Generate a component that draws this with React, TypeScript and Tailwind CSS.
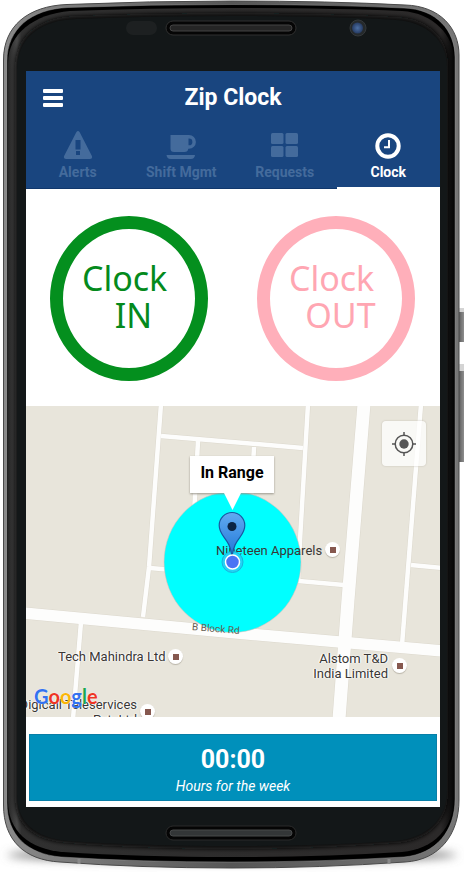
import React from "react";

const ROBOTO = "font-['Roboto','Liberation_Sans',sans-serif]";

function PhoneShell() {
  return (
    <svg
      aria-hidden="true"
      className="absolute inset-0 h-full w-full"
      viewBox="0 0 464 872"
      preserveAspectRatio="none"
    >
      <defs>
        <linearGradient id="edge" x1="0" x2="1" y1="0" y2="0">
          <stop offset="0" stopColor="#8a8a8a" />
          <stop offset="0.5" stopColor="#565656" />
          <stop offset="1" stopColor="#777777" />
        </linearGradient>
        <linearGradient id="band" x1="0" x2="1" y1="0" y2="0">
          <stop offset="0" stopColor="#262626" />
          <stop offset="0.02" stopColor="#484848" />
          <stop offset="0.03" stopColor="#303030" />
          <stop offset="0.97" stopColor="#2b2929" />
          <stop offset="1" stopColor="#050505" />
        </linearGradient>
        <linearGradient id="key" x1="0" x2="1" y1="0" y2="0">
          <stop offset="0" stopColor="#444444" />
          <stop offset="0.5" stopColor="#777777" />
          <stop offset="1" stopColor="#a0a0a0" />
        </linearGradient>
        <radialGradient id="lens">
          <stop offset="0" stopColor="#4d6fa3" />
          <stop offset="1" stopColor="#263b62" />
        </radialGradient>
        <filter id="soft" x="-20%" y="-200%" width="140%" height="500%">
          <feGaussianBlur stdDeviation="5" />
        </filter>
        <filter id="blend">
          <feGaussianBlur stdDeviation="2" />
        </filter>
      </defs>
      <ellipse cx="232" cy="855" rx="225" ry="7" fill="#777777" filter="url(#soft)" />
      <rect x="457" y="308" width="9" height="34" rx="2" fill="url(#key)" />
      <rect x="457" y="364" width="9" height="98" rx="2" fill="url(#key)" />
      <rect x="459" y="308" width="7" height="4" fill="#d4d4d4" />
      <rect x="459" y="364" width="7" height="7" fill="#d4d4d4" />
      <path
        d="M3.500 60C3.500 26 28 6 67 4.500Q150 1 232 1Q330 1 405 5C440 6 459 28 459 55V800C459 834 440 860 405 862Q320 868 232 868Q140 868 60 862C24 860 3.500 840 3.500 805Z"
        fill="url(#edge)"
        stroke="#4a4a4a"
        strokeWidth="1"
      />
      <path
        d="M7 61C7 29 31 9 68 7.500Q150 4.500 232 4.500Q330 4.500 404 8C437 9 455 31 455 57V799C455 831 436 854 404 857Q320 862 232 862Q140 862 61 857C27 854 7 835 7 803Z"
        fill="#000000"
        stroke="#9a9a9a"
        strokeOpacity="0.45"
        strokeWidth="1"
      />
      <path
        d="M8 63C8 34 34 14 70 11Q150 8 232 8Q330 8 402 11C433 13 454 35 454 60V797C454 828 434 849 402 852Q320 857 232 857Q140 857 63 852C29 849 8 831 8 801Z"
        fill="url(#band)"
      />
      <path
        d="M15 68C15 36 38 18 74 16Q150 13 232 13Q330 13 398 17C429 19 448 38 448 64V793C448 822 428 840 398 843Q320 849 232 849Q140 849 66 843C33 840 15 825 15 797Z"
        fill="#0a0b0b"
        filter="url(#blend)"
      />
      <path
        d="M17 70C17 38 40 20 76 19Q150 16 232 16Q330 16 396 20C427 22 447 41 447 66V791C447 820 426 838 396 841Q320 846 232 846Q140 846 68 841C35 838 17 822 17 795Z"
        fill="#131718"
      />
      <rect x="126" y="21" width="31" height="14" rx="7" fill="#1d2021" />
      <rect x="166" y="21" width="130" height="14" rx="7" fill="#050505" stroke="#303030" />
      <rect x="170" y="25" width="122" height="6" rx="3" fill="#252525" stroke="#444444" />
      <circle cx="358" cy="28" r="8" fill="#25292b" stroke="#34383a" />
      <circle cx="357.500" cy="28" r="5.500" fill="url(#lens)" />
      <rect x="166" y="826" width="130" height="14" rx="7" fill="#050505" stroke="#2b2b2b" />
      <rect x="170" y="830" width="122" height="6" rx="3" fill="#333637" stroke="#484a4b" />
      <path d="M79 859v5M389 859v5" stroke="#8a8a8a" strokeWidth="3" />
    </svg>
  );
}

function AlertIcon() {
  return (
    <svg width="30" height="28" viewBox="0 0 30 28" fill="currentColor" aria-hidden="true">
      <path
        fillRule="evenodd"
        d="M13.300 1.200Q15 -1 16.700 1.200L28.900 25Q29.800 28 27 28H3Q.2 28 1.100 25ZM12.500 9V18.500H17.500V9ZM13 20V24H17V20Z"
      />
    </svg>
  );
}

function CupIcon() {
  return (
    <svg width="30" height="24" viewBox="0 0 30 24" fill="currentColor" aria-hidden="true">
      <path
        fillRule="evenodd"
        d="M4.500 0H23a6.800 6.800 0 0 1 0 13.800H22.300Q21.800 17 18.500 17H8Q4.500 17 4.500 13.500ZM22.500 3.500V10.300H23a3.300 3.300 0 0 0 0-6.800Z"
      />
      <path d="M.5 20H29Q28.500 24 25 24H4.500Q1 24 .5 20Z" />
    </svg>
  );
}

function GridIcon() {
  return (
    <svg width="27" height="26" viewBox="0 0 27 26" fill="currentColor" aria-hidden="true">
      <rect width="12.500" height="11" rx="1.500" />
      <rect x="14.500" width="12.500" height="11" rx="1.500" />
      <rect y="13" width="12.500" height="11" rx="1.500" />
      <rect x="14.500" y="13" width="12.500" height="11" rx="1.500" />
    </svg>
  );
}

function ClockIcon() {
  return (
    <svg width="26" height="26" viewBox="0 0 26 26" fill="none" stroke="currentColor" aria-hidden="true">
      <circle cx="13" cy="13" r="10.700" strokeWidth="4" />
      <path d="M14 7V14.300H9" strokeWidth="2" />
    </svg>
  );
}

const tabs = [
  { label: "Alerts", icon: <AlertIcon />, active: false },
  { label: "Shift Mgmt", icon: <CupIcon />, active: false },
  { label: "Requests", icon: <GridIcon />, active: false },
  { label: "Clock", icon: <ClockIcon />, active: true },
];

function Header() {
  return (
    <header className="bg-[#19457f] text-white">
      <div className="grid h-[54px] grid-cols-[54px_1fr_54px] items-center">
        <button type="button" aria-label="Menu" className="flex h-full items-center pl-[17px]">
          <svg width="20" height="18" viewBox="0 0 20 18" fill="currentColor" aria-hidden="true">
            <rect width="20" height="4" rx="1" />
            <rect y="7" width="20" height="4" rx="1" />
            <rect y="14" width="20" height="4" rx="1" />
          </svg>
        </button>
        <h1 className="text-center text-[23px] font-bold">Zip Clock</h1>
      </div>
      <nav className="grid grid-cols-4">
        {tabs.map((tab) => (
          <button
            key={tab.label}
            type="button"
            aria-current={tab.active ? "page" : undefined}
            className={
              tab.active
                ? "flex h-16 flex-col items-center gap-[3px] border-b-2 border-white text-white"
                : "flex h-16 flex-col items-center gap-[3px] border-b border-[#10376c] text-[#446b9c]"
            }
          >
            <span className="flex h-[34px] items-end">{tab.icon}</span>
            <span className="text-sm font-bold leading-5">{tab.label}</span>
          </button>
        ))}
      </nav>
    </header>
  );
}

function PunchButtons() {
  return (
    <section className="flex h-[217px] justify-between bg-white pt-[27px] pr-[25px] pl-6 font-['Noto_Sans','DejaVu_Sans',sans-serif] text-[34px] leading-[37px]">
      <button
        type="button"
        className="h-[165px] w-[158px] rounded-[50%] border-[13px] border-[#048f1e] pb-1 whitespace-pre text-[#048a1c]"
      >
        {"Clock\u00a0\n\u00a0IN"}
      </button>
      <button
        type="button"
        className="h-[165px] w-[158px] rounded-[50%] border-[13px] border-[#ffafba] pb-1 whitespace-pre text-[#ffa6b2]"
      >
        {"Clock\u00a0\n\u00a0OUT"}
      </button>
    </section>
  );
}

function Roads() {
  return (
    <svg
      aria-hidden="true"
      className="absolute top-0 left-0"
      width="414"
      height="311"
      viewBox="26 406 414 311"
      fill="none"
    >
      {[
        { color: "#dcd8cd", extra: 1 },
        { color: "#fdfdfc", extra: 0 },
      ].map(({ color, extra }) => (
        <g key={color} stroke={color}>
          <g strokeWidth={4.5 + extra}>
            <path d="M161 404L149 567L143 617" />
            <path d="M161 436L303 448" />
            <path d="M198 441L191 570" />
            <path d="M254 447L248 560" />
            <path d="M308 404L300 540L298 582" />
            <path d="M150 568L344 585" />
            <path d="M421 404L402 645" />
            <path d="M411 565L442 568" />
            <path d="M81 622L73 719" />
          </g>
          <path d="M364 404L348 600L339 719" strokeWidth={13 + extra} />
          <path d="M24 613L232 632.500L442 651" strokeWidth={11.500 + extra} />
        </g>
      ))}
      <ellipse cx="232.500" cy="562" rx="68.500" ry="70.500" fill="#00ffff" stroke="#f3b6b0" strokeWidth="0.500" />
    </svg>
  );
}

function Pin() {
  return (
    <svg
      aria-hidden="true"
      className="absolute top-[105px] left-[191px]"
      width="31"
      height="64"
      viewBox="217 511 31 64"
    >
      <defs>
        <linearGradient id="pin" x1="0" x2="0" y1="0" y2="1">
          <stop offset="0" stopColor="#62abf2" />
          <stop offset="1" stopColor="#1f76d6" />
        </linearGradient>
      </defs>
      <circle cx="232.500" cy="562" r="10.500" fill="#22d3f5" stroke="#19b4dc" />
      <path
        d="M232 512.500A12.800 12.800 0 0 0 219.200 525.500C219.200 537 230.300 538 232 557C233.700 538 244.800 537 244.800 525.500A12.800 12.800 0 0 0 232 512.500Z"
        fill="url(#pin)"
        stroke="#19569f"
        strokeWidth="1.200"
      />
      <circle cx="232" cy="526.500" r="4.500" fill="#0b2545" />
      <circle cx="232.500" cy="562" r="7" fill="#4a74f4" stroke="#ffffff" strokeWidth="1.500" />
    </svg>
  );
}

function Marker({ place }: { place: string }) {
  return (
    <span
      className={`absolute flex size-[15px] items-center justify-center rounded-full bg-white shadow-[0_1px_1px_#b9b4a8] ${place}`}
    >
      <span className="size-[6px] bg-[#86584f]" />
    </span>
  );
}

const HALO = "[text-shadow:0_0_2px_#fff,1px_0_1px_#fff,-1px_0_1px_#fff]";

function MapView() {
  return (
    <section
      aria-label="Map"
      className="relative h-[311px] overflow-hidden bg-[#e8e5db] text-[13px] leading-[15px] text-[#3a3735]"
    >
      <Roads />
      <span className="absolute top-[137px] left-[190px] whitespace-nowrap">Nineteen Apparels</span>
      <span className="absolute top-[215px] left-[166px] rotate-[5deg] whitespace-nowrap text-[10px] text-[#665c50]">
        B Block Rd
      </span>
      <span className={`absolute top-[243px] left-[32px] whitespace-nowrap ${HALO}`}>Tech Mahindra Ltd</span>
      <span className={`absolute top-[245px] left-[262px] w-[100px] text-right ${HALO}`}>
        Alstom T&amp;D
        <br />
        India Limited
      </span>
      <span className={`absolute top-[291px] left-[-29px] w-[140px] text-right whitespace-nowrap ${HALO}`}>
        Digicall Teleservices
        <br />
        Pvt. Ltd
      </span>
      <Marker place="top-[136px] left-[299px]" />
      <Marker place="top-[243px] left-[142px]" />
      <Marker place="top-[252px] left-[366px]" />
      <Marker place="top-[298px] left-[114px]" />
      <Pin />
      <div className="absolute top-[50px] left-[164px] flex h-[37px] w-[84px] items-center justify-center bg-white pb-1 text-base font-bold text-black shadow-[0_1px_2px_#9b978d]">
        In Range
        <svg aria-hidden="true" className="absolute top-full left-[34px]" width="17" height="17" viewBox="0 0 17 17">
          <path d="M0 0H17L8.500 17Z" fill="#ffffff" />
        </svg>
      </div>
      <span className="absolute top-[278px] left-[8px] font-['Lato',sans-serif] text-[20px] leading-6 font-bold [text-shadow:0_0_1px_#fff]">
        <span className="text-[#3372f0]">G</span>
        <span className="text-[#ee3524]">o</span>
        <span className="text-[#fbb606]">o</span>
        <span className="text-[#3372f0]">g</span>
        <span className="text-[#1da750]">l</span>
        <span className="text-[#ee3524]">e</span>
      </span>
      <button
        type="button"
        aria-label="My location"
        className="absolute top-[15px] right-[14px] flex h-[45px] w-[44px] items-center justify-center rounded-sm bg-white/75 text-[#555555] shadow-[0_0_2px_#bdb9ae]"
      >
        <svg width="26" height="26" viewBox="0 0 26 26" fill="none" stroke="currentColor" aria-hidden="true">
          <circle cx="13" cy="13" r="8.800" strokeWidth="1.500" />
          <circle cx="13" cy="13" r="4.700" fill="currentColor" stroke="none" />
          <path d="M13 1V5M13 21V25M1 13H5M21 13H25" strokeWidth="1.500" />
        </svg>
      </button>
    </section>
  );
}

export default function App() {
  return (
    <main className={`relative overflow-hidden bg-white ${ROBOTO}`}>
      <PhoneShell />
      <div className="relative mt-[71px] mr-6 mb-[65px] ml-[26px] bg-white">
        <Header />
        <PunchButtons />
        <MapView />
        <section className="px-[3px] pt-[17px] pb-[6px]">
          <div className="flex h-[67px] flex-col items-center border border-[#087fa8] bg-[#0090bb] pt-[9px] text-white">
            <strong className="text-[25px] leading-[32px] font-bold">00:00</strong>
            <em className="text-sm leading-5">Hours for the week</em>
          </div>
        </section>
      </div>
    </main>
  );
}
